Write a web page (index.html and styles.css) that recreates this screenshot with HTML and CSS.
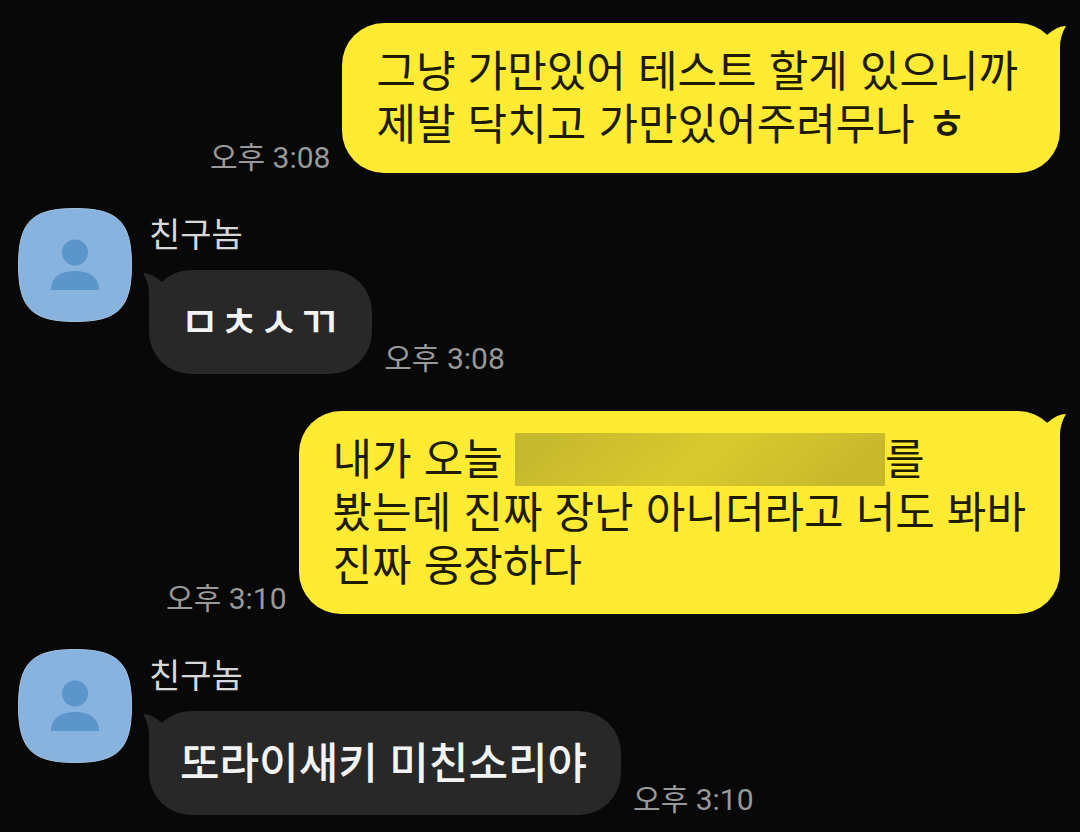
FILE: index.html
```html
<!DOCTYPE html>
<html lang="ko">
<head>
    <meta charset="UTF-8">
    <meta name="viewport" content="width=device-width, initial-scale=1.0">
    <title>친구놈</title>
    <link rel="stylesheet" href="styles.css">
</head>
<body>
    <main class="chat">
        <div class="message sent">
            <time class="time">오후 3:08</time>
            <div class="bubble">
                <svg class="tail" width="32" height="42" viewBox="0 0 32 42" aria-hidden="true"><path d="M32 3Q23 3 13 12L2 42H26V24Q26 13 32 3Z"/></svg>
                <p class="text">그냥 가만있어 테스트 할게 있으니까&thinsp;<br>제발 닥치고 가만있어주려무나 <span class="jamo">ㅎ</span></p>
            </div>
        </div>

        <div class="message received">
            <svg class="avatar" width="114" height="114" viewBox="0 0 114 114" aria-hidden="true">
                <path class="avatar-bg" d="M57 .5C100 .5 113.500 14 113.500 57S100 113.500 57 113.500 .5 100 .5 57 14 .5 57 .5Z"/>
                <circle class="avatar-person" cx="57" cy="44.500" r="13"/>
                <path class="avatar-person" d="M33 82C33 69 43 63 57 63S81 69 81 82Z"/>
            </svg>
            <div class="content">
                <div class="name">친구놈</div>
                <div class="row">
                    <div class="bubble">
                        <svg class="tail" width="32" height="42" viewBox="0 0 32 42" aria-hidden="true"><path d="M0 3Q9 3 19 12L30 42H6V24Q6 13 0 3Z"/></svg>
                        <p class="text">ㅁㅊㅅㄲ</p>
                    </div>
                    <time class="time">오후 3:08</time>
                </div>
            </div>
        </div>

        <div class="message sent">
            <time class="time">오후 3:10</time>
            <div class="bubble">
                <svg class="tail" width="32" height="42" viewBox="0 0 32 42" aria-hidden="true"><path d="M32 3Q23 3 13 12L2 42H26V24Q26 13 32 3Z"/></svg>
                <p class="text">내가 오늘 <span class="masked"></span>를<br>봤는데 진짜 장난 아니더라고 너도 봐바<br>진짜 웅장하다</p>
            </div>
        </div>

        <div class="message received">
            <svg class="avatar" width="114" height="114" viewBox="0 0 114 114" aria-hidden="true">
                <path class="avatar-bg" d="M57 .5C100 .5 113.500 14 113.500 57S100 113.500 57 113.500 .5 100 .5 57 14 .5 57 .5Z"/>
                <circle class="avatar-person" cx="57" cy="44.500" r="13"/>
                <path class="avatar-person" d="M33 82C33 69 43 63 57 63S81 69 81 82Z"/>
            </svg>
            <div class="content">
                <div class="name">친구놈</div>
                <div class="row">
                    <div class="bubble">
                        <svg class="tail" width="32" height="42" viewBox="0 0 32 42" aria-hidden="true"><path d="M0 3Q9 3 19 12L30 42H6V24Q6 13 0 3Z"/></svg>
                        <p class="text">또라이새키 미친소리야</p>
                    </div>
                    <time class="time">오후 3:10</time>
                </div>
            </div>
        </div>
    </main>
</body>
</html>
```
FILE: styles.css
```css
* {
    box-sizing: border-box;
}
body {
    margin: 0;
    background-color: #080808;
    font-family: Roboto, "Noto Sans CJK KR", sans-serif;
}
.chat {
    padding: 23px 20px 16px 18px;
}
.message {
    display: flex;
}
.sent {
    justify-content: flex-end;
    align-items: flex-end;
    gap: 12px;
    margin-bottom: 35px;
}
.received {
    align-items: flex-start;
    gap: 17px;
    margin-bottom: 37px;
}
.message:last-child {
    margin-bottom: 0;
}
.row {
    display: flex;
    align-items: flex-end;
    gap: 12px;
}
.name {
    margin-bottom: 8px;
    color: #d8d8d8;
    font-size: 34px;
    line-height: 54px;
}
.bubble {
    position: relative;
    display: flex;
    align-items: center;
    min-height: 104px;
    padding: 22px 34px;
    border-radius: 42px;
}
.sent .bubble {
    background-color: #ffeb33;
    color: #1e1c00;
}
.received .bubble {
    padding: 22px 34px 22px 31px;
    background-color: #282828;
    color: #f3f3f3;
}
.text {
    margin: 0;
    font-family: Inter, "Noto Sans CJK KR", sans-serif;
    font-size: 43px;
    line-height: 53px;
    white-space: pre;
}
.received .text,
.jamo {
    font-weight: 500;
}
.time {
    color: #999;
    font-size: 30px;
    line-height: 30px;
    white-space: nowrap;
}

/* bubble tail */
.tail {
    position: absolute;
    top: 0;
}
.sent .tail {
    right: -6px;
    fill: #ffeb33;
}
.received .tail {
    left: -6px;
    fill: #282828;
}

/* hidden name */
.masked {
    display: inline-block;
    width: 370px;
    height: 53px;
    vertical-align: top;
    background: linear-gradient(140deg, #c7b92d 10%, #d9ca2e 50%, #c7b82c 90%);
}

.avatar {
    flex: none;
}
.avatar-bg {
    fill: #87b3de;
    stroke: #a3c4e2;
}
.avatar-person {
    fill: #5b95ca;
}
```
